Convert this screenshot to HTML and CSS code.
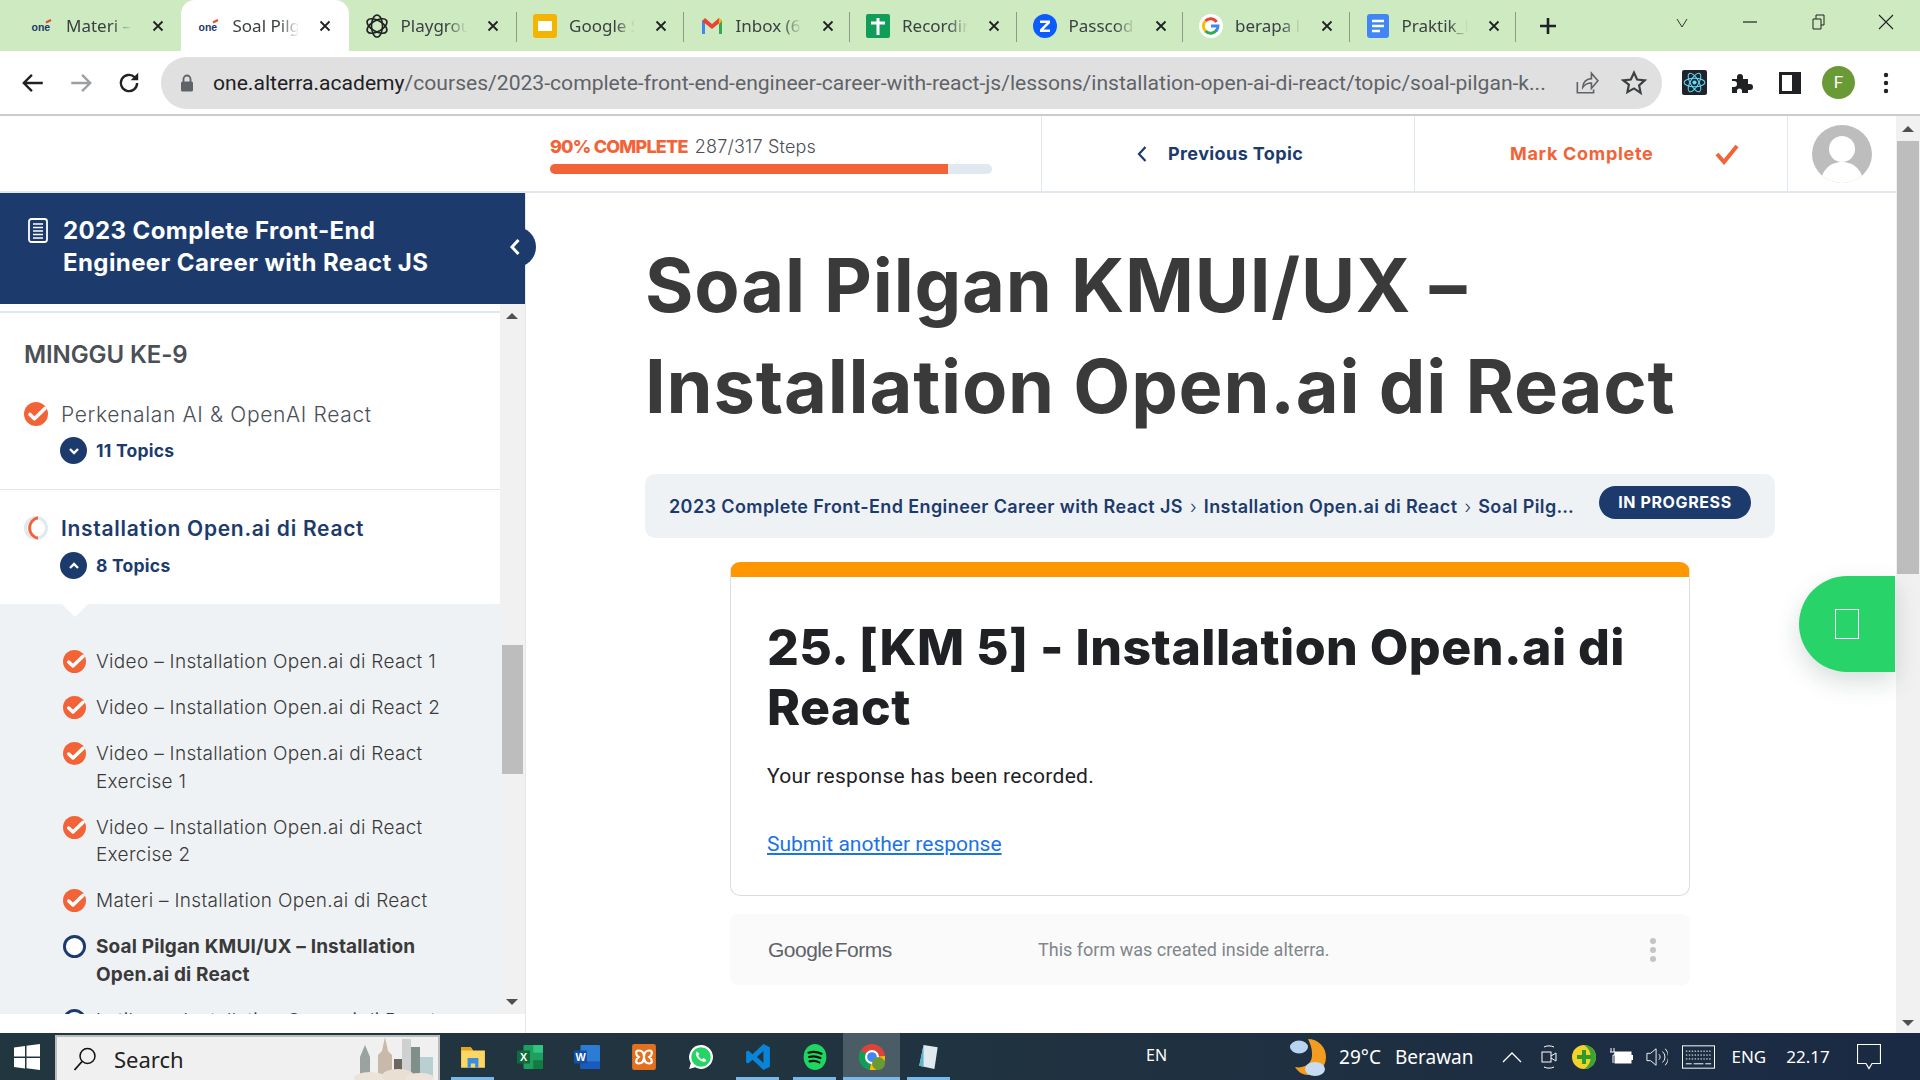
FILE: index.html
```html
<!DOCTYPE html>
<html lang="en">
<head>
  <meta charset="UTF-8">
  <title>Soal Pilgan KMUI/UX</title>
  <link rel="stylesheet" href="styles.css">
</head>
<body>

<svg class="defs" width="0" height="0">
  <symbol id="done" viewBox="0 0 24 24">
    <circle cx="12" cy="12" r="12" fill="#f26437"/>
    <path d="M6 12.5l4.4 4.2L21 6.5" fill="none" stroke="#fff" stroke-width="3.6" stroke-linecap="round" stroke-linejoin="round"/>
  </symbol>
  <symbol id="x" viewBox="0 0 12 12">
    <path d="M1.5 1.5l9 9M10.5 1.5l-9 9" stroke="#202124" stroke-width="1.8"/>
  </symbol>
  <symbol id="one" viewBox="0 0 24 24">
    <text x="1.5" y="17" font-family="Liberation Sans" font-size="10.5" font-weight="700" fill="#1c3b6c">one</text>
    <path d="M16 8.500l5-2.500" stroke="#e2492d" stroke-width="2"/>
  </symbol>
</svg>

<div class="tabstrip">
  <div class="tab"><svg class="favicon"><use href="#one"/></svg><span class="tab-title">Materi – Installation</span><svg class="tab-x"><use href="#x"/></svg></div>
  <div class="tab active"><svg class="favicon"><use href="#one"/></svg><span class="tab-title">Soal Pilgan KMUI</span><svg class="tab-x"><use href="#x"/></svg></div>
  <div class="tab sep">
    <svg class="favicon" viewBox="0 0 24 24" fill="none" stroke="#202124" stroke-width="1.6"><ellipse cx="12" cy="12" rx="5.5" ry="11"/><ellipse cx="12" cy="12" rx="5.5" ry="11" transform="rotate(60 12 12)"/><ellipse cx="12" cy="12" rx="5.5" ry="11" transform="rotate(120 12 12)"/></svg>
    <span class="tab-title">Playground</span><svg class="tab-x"><use href="#x"/></svg></div>
  <div class="tab sep">
    <svg class="favicon" viewBox="0 0 24 24"><rect x="0" y="0" width="24" height="24" rx="3" fill="#f4b400"/><rect x="5" y="7" width="14" height="10" fill="#fff"/></svg>
    <span class="tab-title">Google Slides</span><svg class="tab-x"><use href="#x"/></svg></div>
  <div class="tab sep">
    <svg class="favicon" viewBox="0 0 24 24"><path d="M2 20V7l3-2v15z" fill="#4285f4"/><path d="M19 20V5l3 2v13z" fill="#34a853"/><path d="M2 7l3-3 7 6 7-6 3 3-10 8z" fill="#ea4335"/><path d="M19 4l3 3-3 3z" fill="#fbbc04"/></svg>
    <span class="tab-title">Inbox (6) - gmail</span><svg class="tab-x"><use href="#x"/></svg></div>
  <div class="tab sep">
    <svg class="favicon" viewBox="0 0 24 24"><rect width="24" height="24" rx="2" fill="#0f9d58"/><path d="M12 4v17M5 9h14" stroke="#fff" stroke-width="3"/></svg>
    <span class="tab-title">Recording</span><svg class="tab-x"><use href="#x"/></svg></div>
  <div class="tab sep">
    <svg class="favicon" viewBox="0 0 24 24"><circle cx="12" cy="12" r="12" fill="#0b5cff"/><path d="M7 6.5h10V9l-6.500 6.500H17V18H7v-2.500L13.500 9H7z" fill="#fff"/></svg>
    <span class="tab-title">Passcode</span><svg class="tab-x"><use href="#x"/></svg></div>
  <div class="tab sep">
    <svg class="favicon" viewBox="0 0 24 24"><circle cx="12" cy="12" r="12" fill="#fff"/><path d="M17.5 8a7 7 0 0 0-11-1" fill="none" stroke="#ea4335" stroke-width="3"/><path d="M6.5 7a7 7 0 0 0 0 10" fill="none" stroke="#fbbc04" stroke-width="3"/><path d="M6.5 17a7 7 0 0 0 11-1" fill="none" stroke="#34a853" stroke-width="3"/><path d="M12 12h7a7 7 0 0 1-2 5" fill="none" stroke="#4285f4" stroke-width="3"/></svg>
    <span class="tab-title">berapa lama</span><svg class="tab-x"><use href="#x"/></svg></div>
  <div class="tab sep last">
    <svg class="favicon" viewBox="0 0 24 24"><rect x="1" width="22" height="24" rx="3" fill="#4285f4"/><path d="M6 7h12M6 12h12M6 17h8" stroke="#fff" stroke-width="2.4"/></svg>
    <span class="tab-title">Praktik_Front</span><svg class="tab-x"><use href="#x"/></svg></div>
  <svg class="new-tab" viewBox="0 0 20 20"><path d="M10 2v16M2 10h16" stroke="#202124" stroke-width="2.6"/></svg>
  <div class="window-btns">
    <svg viewBox="0 0 16 16"><path d="M3 5l5 8 5-8" fill="none" stroke="#333" stroke-width="1"/></svg>
    <svg viewBox="0 0 16 16"><path d="M1 8h14" stroke="#222" stroke-width="1.2"/></svg>
    <svg viewBox="0 0 16 16"><path d="M3 5h8v10H3zM6 5V1h8v10h-3" fill="none" stroke="#222" stroke-width="1"/></svg>
    <svg viewBox="0 0 16 16"><path d="M1 1l14 14M15 1L1 15" stroke="#222" stroke-width="1.1"/></svg>
  </div>
</div>

<div class="toolbar">
  <svg class="tool" viewBox="0 0 24 24"><path d="M21 12H4M11 4.500L3.500 12l7.500 7.500" fill="none" stroke="#202124" stroke-width="2.2"/></svg>
  <svg class="tool" viewBox="0 0 24 24"><path d="M3 12h17M13 4.500l7.500 7.500-7.500 7.500" fill="none" stroke="#9aa0a6" stroke-width="2.2"/></svg>
  <svg class="tool" viewBox="0 0 24 24"><path d="M19.5 12a7.500 7.500 0 1 1-2.200-5.300" fill="none" stroke="#202124" stroke-width="2.2"/><path d="M20.5 2.500v7h-7z" fill="#202124"/></svg>
  <div class="omnibox">
    <svg class="lock" viewBox="0 0 14 18"><path d="M3.500 8V5a3.500 3.500 0 0 1 7 0v3" fill="none" stroke="#5f6368" stroke-width="1.8"/><rect x="1" y="7.500" width="12" height="10" rx="1.5" fill="#5f6368"/></svg>
    <div class="url"><b>one.alterra.academy</b>/courses/2023-complete-front-end-engineer-career-with-react-js/lessons/installation-open-ai-di-react/topic/soal-pilgan-k...</div>
    <svg class="omni-icon" viewBox="0 0 24 24"><path d="M4 11v10h15v-3M9 16c0-5 4-8 8-8V3l6 7-6 7v-5c-4 0-6 1-8 4z" fill="none" stroke="#5f6368" stroke-width="1.5"/></svg>
    <svg class="omni-icon star" viewBox="0 0 24 24"><path d="M12 2.500l2.900 6.300 6.900.8-5.100 4.700 1.400 6.800L12 17l-6.100 3.400 1.400-6.800L2.200 9.600l6.900-.8z" fill="none" stroke="#3c4043" stroke-width="2"/></svg>
  </div>
  <div class="ext">
    <svg class="ext-react" viewBox="0 0 24 24"><rect width="24" height="24" rx="2" fill="#20232a"/><g fill="none" stroke="#61dafb" stroke-width="1"><ellipse cx="12" cy="12" rx="10" ry="4"/><ellipse cx="12" cy="12" rx="10" ry="4" transform="rotate(60 12 12)"/><ellipse cx="12" cy="12" rx="10" ry="4" transform="rotate(120 12 12)"/></g><circle cx="12" cy="12" r="2" fill="#61dafb"/></svg>
    <svg class="ext-puzzle" viewBox="0 0 24 24"><path d="M3 8h5V6a3 3 0 0 1 6 0v2h5v5h2a3 3 0 0 1 0 6h-2v3h-6v-2a2.500 2.500 0 0 0-5 0v2H3v-6h2a3 3 0 0 0 0-6H3z" fill="#202124"/></svg>
    <svg class="ext-panel" viewBox="0 0 22 22"><rect x="1.500" y="1.500" width="19" height="19" fill="none" stroke="#202124" stroke-width="3"/><rect x="13" y="2" width="7" height="18" fill="#202124"/></svg>
    <span class="profile">F</span>
    <svg class="ext-more" viewBox="0 0 6 24"><circle cx="3" cy="4" r="2.2" fill="#202124"/><circle cx="3" cy="12" r="2.2" fill="#202124"/><circle cx="3" cy="20" r="2.2" fill="#202124"/></svg>
  </div>
</div>

<div class="window">
  <div class="page">
    <header class="topbar">
      <div class="progress">
        <div class="progress-text"><strong>90% COMPLETE</strong> 287/317 Steps</div>
        <div class="progress-bar"><div class="progress-fill" style="width:90%"></div></div>
      </div>
      <div class="top-action prev">
        <svg viewBox="0 0 12 20"><path d="M9.500 3L3 10l6.500 7" fill="none" stroke="#1c3b6c" stroke-width="2.2"/></svg>
        <span>Previous Topic</span>
      </div>
      <div class="top-action mark">
        <span>Mark Complete</span>
        <svg viewBox="0 0 26 22"><path d="M3 11l7 8L23 3" fill="none" stroke="#f26437" stroke-width="4"/></svg>
      </div>
      <div class="avatar">
        <svg viewBox="0 0 60 60"><defs><clipPath id="av"><ellipse cx="30" cy="30" rx="30" ry="29"/></clipPath></defs><rect width="60" height="60" fill="#fff"/><g clip-path="url(#av)"><rect width="60" height="60" fill="#bdbdbd"/><circle cx="30" cy="25" r="13" fill="#fff"/><path d="M8 60c2-16 12-22 22-22s20 6 22 22z" fill="#fff"/></g></svg>
      </div>
    </header>

    <div class="content">
      <aside class="sidebar">
        <div class="course-head">
          <svg class="course-icon" viewBox="0 0 20 25"><rect x="1" y="1" width="18" height="23" rx="2.5" fill="none" stroke="#fff" stroke-width="1.8"/><path d="M5 6h10M5 9.500h10M5 13h10M5 16.500h10M5 20h10" stroke="#fff" stroke-width="1.5"/></svg>
          <h2>2023 Complete Front-End Engineer Career with React JS</h2>
          <div class="collapse"><svg viewBox="0 0 12 20"><path d="M9.500 3L3 10l6.500 7" fill="none" stroke="#fff" stroke-width="3"/></svg></div>
        </div>
        <div class="nav-wrap">
          <div class="nav">
            <h3 class="section-title">MINGGU KE-9</h3>

            <div class="lesson first">
              <div class="lesson-row">
                <svg class="lesson-status"><use href="#done"/></svg>
                <span>Perkenalan AI &amp; OpenAI React</span>
              </div>
              <div class="topic-toggle">
                <span class="toggle-dot"><svg viewBox="0 0 14 14"><path d="M3 5l4 4 4-4" fill="none" stroke="#fff" stroke-width="2.4"/></svg></span>
                <span>11 Topics</span>
              </div>
            </div>

            <div class="lesson current">
              <div class="lesson-row">
                <svg class="lesson-status" viewBox="0 0 24 24"><circle cx="12" cy="12" r="10.5" fill="none" stroke="#e2e8f0" stroke-width="3"/><path d="M14 1.700A10.500 10.500 0 0 0 14 22.300" fill="none" stroke="#f26437" stroke-width="3"/></svg>
                <span>Installation Open.ai di React</span>
              </div>
              <div class="topic-toggle">
                <span class="toggle-dot"><svg viewBox="0 0 14 14"><path d="M3 9l4-4 4 4" fill="none" stroke="#fff" stroke-width="2.4"/></svg></span>
                <span>8 Topics</span>
              </div>
            </div>

            <ul class="topics">
              <li><svg class="topic-status"><use href="#done"/></svg><span>Video – Installation Open.ai di React 1</span></li>
              <li><svg class="topic-status"><use href="#done"/></svg><span>Video – Installation Open.ai di React 2</span></li>
              <li><svg class="topic-status"><use href="#done"/></svg><span>Video – Installation Open.ai di React Exercise 1</span></li>
              <li><svg class="topic-status"><use href="#done"/></svg><span>Video – Installation Open.ai di React Exercise 2</span></li>
              <li><svg class="topic-status"><use href="#done"/></svg><span>Materi – Installation Open.ai di React</span></li>
              <li class="on"><svg class="topic-status" viewBox="0 0 24 24"><circle cx="12" cy="12" r="10.5" fill="#fff" stroke="#1c3b6c" stroke-width="3"/></svg><span>Soal Pilgan KMUI/UX – Installation Open.ai di React</span></li>
              <li><svg class="topic-status" viewBox="0 0 24 24"><circle cx="12" cy="12" r="10.5" fill="#fff" stroke="#1c3b6c" stroke-width="3"/></svg><span>Latihan – Installation Open.ai di React</span></li>
            </ul>
          </div>
          <div class="nav-scroll">
            <span class="arrow-up"></span>
            <div class="nav-thumb"></div>
            <span class="arrow-down"></span>
          </div>
        </div>
      </aside>

      <main class="main">
        <h1>Soal Pilgan KMUI/UX – Installation Open.ai di React</h1>
        <div class="crumbs">
          <div class="crumb-text">2023 Complete Front-End Engineer Career with React JS <i>›</i> Installation Open.ai di React <i>›</i> Soal Pilgan KMUI/UX – Installation Open.ai di React</div>
          <span class="badge">IN PROGRESS</span>
        </div>
        <div class="gform">
          <div class="gform-card">
            <h2>25. [KM 5] - Installation Open.ai di React</h2>
            <p>Your response has been recorded.</p>
            <a href="#">Submit another response</a>
          </div>
          <div class="gform-foot">
            <span class="gf-logo">Google<em>Forms</em></span>
            <span class="gf-note">This form was created inside alterra.</span>
            <span class="gf-dots"><i></i><i></i><i></i></span>
          </div>
        </div>
      </main>
    </div>

    <div class="chat-tab"><span class="tofu"></span></div>
  </div>

  <div class="page-scroll">
    <span class="arrow-up"></span>
    <div class="page-thumb"></div>
    <span class="arrow-down"></span>
  </div>
</div>

<footer class="taskbar">
  <svg class="start" viewBox="0 0 26 26"><path d="M0 3.500L11 2v10.500H0zM12.500 1.800L26 0v12.500H12.500zM0 14h11v10.500L0 23zM12.500 14H26v12l-13.500-1.800z" fill="#fff"/></svg>
  <div class="search">
    <svg class="search-glass" viewBox="0 0 24 24"><circle cx="14.500" cy="9" r="7.500" fill="none" stroke="#111" stroke-width="1.5"/><path d="M9 14.500L1.500 23" stroke="#111" stroke-width="1.8"/></svg>
    <span>Search</span>
    <svg class="city" viewBox="0 0 90 45"><path d="M12 45V22l5-12 5 12v23z" fill="#9aa39f"/><path d="M30 45V20l4-4 3-14 3 14 4 4v25z" fill="#c9b9a8"/><rect x="46" y="24" width="11" height="18" fill="#6d675f"/><rect x="54" y="4" width="9" height="38" fill="#cfd1d0"/><rect x="63" y="12" width="9" height="30" fill="#7f9088"/><rect x="72" y="22" width="13" height="20" fill="#b9cfd2"/><ellipse cx="22" cy="43" rx="16" ry="6" fill="#ece4d8"/><ellipse cx="50" cy="41" rx="16" ry="7" fill="#e9e0d3"/><ellipse cx="72" cy="43" rx="14" ry="5" fill="#ece4d8"/></svg>
  </div>
  <div class="apps">
    <div class="app on">
      <svg viewBox="0 0 24 24"><path d="M1 3h9l2 3h11v16H1z" fill="#fdd663"/><path d="M1 3h9l2 3H1z" fill="#e8a317"/><path d="M7 22v-9h10v9h-3v-4h-4v4z" fill="#3b8de0"/></svg>
    </div>
    <div class="app">
      <svg viewBox="0 0 24 24"><rect x="6" y="1" width="18" height="22" rx="1" fill="#1e9e5f"/><rect x="15" y="1" width="9" height="7" fill="#33c481"/><rect x="15" y="15" width="9" height="8" fill="#107c41"/><rect x="0" y="6" width="12" height="12" fill="#0f6b3a"/><text x="6" y="16" text-anchor="middle" font-family="Liberation Sans" font-size="10" font-weight="700" fill="#fff">X</text></svg>
    </div>
    <div class="app">
      <svg viewBox="0 0 24 24"><rect x="6" y="1" width="18" height="22" rx="1" fill="#2b7cd3"/><rect x="6" y="16" width="18" height="7" fill="#185abd"/><rect x="0" y="6" width="12" height="12" fill="#124fa8"/><text x="6" y="16" text-anchor="middle" font-family="Liberation Sans" font-size="10" font-weight="700" fill="#fff">W</text></svg>
    </div>
    <div class="app">
      <svg viewBox="0 0 24 24"><rect x="1" width="22" height="24" rx="2" fill="#e2701f"/><path d="M7 6c5 0 5 5 5 6s0 6-5 6c-3 0-3-4 0-6-3-2-3-6 0-6zM17 6c-5 0-5 5-5 6s0 6 5 6c3 0 3-4 0-6 3-2 3-6 0-6z" fill="none" stroke="#fff" stroke-width="2"/></svg>
    </div>
    <div class="app">
      <svg viewBox="0 0 24 24"><path d="M12 1a11 11 0 0 0-9.400 16.700L1 23l5.500-1.500A11 11 0 1 0 12 1z" fill="#fff"/><circle cx="12" cy="12" r="9" fill="#25d366"/><path d="M8 7c-2 2 0 6 3 8s5 2 6 0l-2.500-2-1.500 1c-1.500-.5-3-2-3.500-3.500l1-1.500z" fill="#fff"/></svg>
    </div>
    <div class="app on">
      <svg viewBox="0 0 24 24"><path d="M17 0l6 3v18l-6 3L7 14.500 3 18l-2-1V7l2-1 4 3.500zM17 6.500L11 12l6 5.500z" fill="#0a84d6"/></svg>
    </div>
    <div class="app on">
      <svg viewBox="0 0 24 24"><ellipse cx="12" cy="12" rx="10.5" ry="12" fill="#1ed760"/><path d="M6 8c4-1.200 8-1 12 1M6.500 12c3.500-1 7-.8 10.500 1M7 16c3-.8 6-.6 9 1" fill="none" stroke="#111" stroke-width="2" stroke-linecap="round"/></svg>
    </div>
    <div class="app on active">
      <svg viewBox="0 0 24 24"><circle cx="12" cy="12" r="12" fill="#db4437"/><path d="M12 12L1.500 6A12 12 0 0 0 10 24z" fill="#0f9d58"/><path d="M12 12l12-1a12 12 0 0 1-14 13z" fill="#fbbc04"/><circle cx="12" cy="12" r="5.5" fill="#4285f4" stroke="#fff" stroke-width="2"/><circle cx="18" cy="18" r="6" fill="#6a9a35"/></svg>
    </div>
    <div class="app on">
      <svg viewBox="0 0 24 24"><path d="M7 1l13 2-3 20-14-3z" fill="#dfeaf0"/><path d="M7 1L3 20l4 1z" fill="#5db4c8"/></svg>
    </div>
  </div>
  <span class="lang-en">EN</span>
  <div class="tray">
    <svg class="weather" viewBox="0 0 36 40"><path d="M18 2a18 18 0 0 1 0 36c-5 0-10-3-13-8 10 2 18-4 17-14 0-5-2-10-4-14z" fill="#f39c1f"/><ellipse cx="9" cy="10" rx="9" ry="6.5" fill="#b8d4f0"/><ellipse cx="25" cy="32" rx="10" ry="7" fill="#c6dcf2"/></svg>
    <span class="temp">29°C</span>
    <span class="cond">Berawan</span>
    <svg class="tray-caret" viewBox="0 0 20 12"><path d="M1 11l9-9 9 9" fill="none" stroke="#fff" stroke-width="1.3"/></svg>
    <svg class="tray-cam" viewBox="0 0 16 24"><path d="M3 2c3-1.500 7-1.500 10 0M3 22c3 1.500 7 1.500 10 0" fill="none" stroke="#fff"/><rect x="1" y="7" width="9" height="10" fill="none" stroke="#fff"/><path d="M10 11l5-3v8l-5-3" fill="none" stroke="#fff"/></svg>
    <svg class="tray-360" viewBox="0 0 24 24"><circle cx="12" cy="12" r="12" fill="#f3d329"/><path d="M12 0a12 12 0 0 1 0 24 14 14 0 0 0 0-24z" fill="#3aa534"/><path d="M10 5h4v5h5v4h-5v5h-4v-5H5v-4h5z" fill="#2e9a2e"/></svg>
    <svg class="tray-batt" viewBox="0 0 24 20"><rect x="6" y="5" width="16" height="11" fill="#fff" stroke="#fff"/><rect x="22" y="8" width="2" height="5" fill="#fff"/><path d="M2 1v4M5 1v4M1 5h5v3H4v8" fill="none" stroke="#fff"/></svg>
    <svg class="tray-vol" viewBox="0 0 24 22"><path d="M1 7h4l6-5v18l-6-5H1z" fill="none" stroke="#fff"/><path d="M14 8a4 4 0 0 1 0 6M18 5a8 8 0 0 1 0 12M21 2a13 13 0 0 1 0 18" fill="none" stroke="#fff"/></svg>
    <svg class="tray-kbd" viewBox="0 0 34 24"><rect x=".5" y=".5" width="33" height="23" fill="none" stroke="#fff"/><path d="M4 6h26M4 10h26M4 14h26" stroke="#fff" stroke-dasharray="1.500 1.500"/><path d="M4 19h6M12 19h10M24 19h6" stroke="#fff"/></svg>
    <span class="tray-lang">ENG</span>
    <span class="clock">22.17</span>
    <svg class="tray-note" viewBox="0 0 24 26"><path d="M.5.500h23v19H15l-3 5-3-5H.5z" fill="none" stroke="#fff" stroke-width="1.2"/></svg>
  </div>
</footer>

</body>
</html>
```

FILE: styles.css
```css
* {
  box-sizing: border-box;
}
html, body {
  margin: 0;
  height: 100%;
  overflow: hidden;
}
body {
  display: flex;
  flex-direction: column;
  height: 1080px;
  font-family: "Inter", "Liberation Sans", sans-serif;
  color: #3a3a3a;
  background-color: #ffffff;
}
.defs {
  position: absolute;
}

/* browser chrome */
.tabstrip {
  display: flex;
  align-items: center;
  height: 51px;
  padding-left: 14px;
  background-color: #cdeac0;
  flex-shrink: 0;
}
.tab {
  display: flex;
  align-items: center;
  width: 166.5px;
  height: 51px;
  padding-left: 16px;
  position: relative;
  font-family: "Noto Sans", sans-serif;
  font-size: 17px;
  color: #3c4043;
}
.tab.sep::after {
  content: "";
  position: absolute;
  right: 0;
  top: 12px;
  height: 30px;
  width: 1px;
  background-color: #8d9a87;
}
.tab.active {
  background-color: #ffffff;
  border-radius: 14px 14px 0 0;
  width: 168px;
}
.tab.active + .tab {
  width: 168.5px;
}
.favicon {
  width: 24px;
  height: 24px;
  flex-shrink: 0;
}
.tab-title {
  width: 66px;
  margin-left: 12px;
  white-space: nowrap;
  overflow: hidden;
  -webkit-mask-image: linear-gradient(to right, #000 70%, transparent);
  mask-image: linear-gradient(to right, #000 70%, transparent);
}
.tab-x {
  width: 12px;
  height: 12px;
  margin-left: 20px;
  flex-shrink: 0;
}
.new-tab {
  width: 20px;
  height: 20px;
  margin-left: 22px;
}
.window-btns {
  display: flex;
  align-items: center;
  gap: 52px;
  margin-left: auto;
  padding-right: 26px;
  margin-top: -8px;
}
.window-btns svg {
  width: 16px;
  height: 16px;
}
.toolbar {
  display: flex;
  align-items: center;
  height: 65px;
  padding-left: 20px;
  border-bottom: 2px solid #cccccc;
  flex-shrink: 0;
}
.tool {
  width: 26px;
  height: 26px;
  margin-right: 22px;
}
.toolbar .omnibox {
  margin-left: -3px;
}
.omnibox {
  display: flex;
  align-items: center;
  width: 1501px;
  height: 52px;
  padding: 0 12px 0 20px;
  border-radius: 26px;
  background-color: #e0e0e0;
}
.lock {
  width: 14px;
  height: 18px;
  margin-left: -1px;
  flex-shrink: 0;
}
.url {
  width: 1336px;
  margin-left: 19px;
  font-family: "Roboto", sans-serif;
  font-size: 21.1px;
  color: #5f6368;
  white-space: nowrap;
  overflow: hidden;
  flex-shrink: 0;
}
.url b {
  font-weight: 400;
  color: #202124;
}
.omni-icon {
  width: 26px;
  height: 26px;
  margin-left: 24px;
  flex-shrink: 0;
}
.omni-icon.star {
  margin-left: 22px;
}
.ext {
  display: flex;
  align-items: center;
  margin-left: 20px;
}
.ext-react {
  width: 25px;
  height: 25px;
}
.ext-puzzle {
  width: 24px;
  height: 24px;
  margin-left: 22px;
}
.ext-panel {
  width: 22px;
  height: 22px;
  margin-left: 26px;
}
.profile {
  width: 33px;
  height: 33px;
  margin-left: 21px;
  border-radius: 50%;
  background-color: #6a9a35;
  color: #ffffff;
  font-family: "Roboto", sans-serif;
  font-size: 17px;
  line-height: 33px;
  text-align: center;
}
.ext-more {
  width: 6px;
  height: 24px;
  margin-left: 28px;
}

/* page area */
.window {
  display: flex;
  flex: 1;
  min-height: 0;
}
.page {
  position: relative;
  display: flex;
  flex-direction: column;
  flex: 1;
  min-width: 0;
}
.topbar {
  display: flex;
  height: 77px;
  border-bottom: 2px solid #e2e8f0;
  flex-shrink: 0;
}
.progress {
  width: 491px;
  margin-left: 550px;
  padding-top: 18px;
}
.progress-text {
  font-size: 18px;
  line-height: 26px;
  font-weight: 300;
  letter-spacing: 0.2px;
  color: #4b4f56;
}
.progress-text strong {
  font-weight: 800;
  color: #f26437;
  letter-spacing: -0.8px;
  margin-right: 2px;
}
.progress-bar {
  width: 442px;
  height: 10px;
  margin-top: 4px;
  border-radius: 5px;
  background-color: #e2e8f0;
  overflow: hidden;
}
.progress-fill {
  height: 100%;
  background-color: #f26437;
}
.top-action {
  display: flex;
  align-items: center;
  width: 373px;
  border-left: 1px solid #e2e8f0;
  font-size: 18px;
  font-weight: 700;
}
.top-action.prev {
  padding-left: 94px;
  letter-spacing: 0.4px;
  color: #1c3b6c;
}
.top-action.prev svg {
  width: 12px;
  height: 20px;
  margin-right: 20px;
}
.top-action.mark {
  padding-left: 95px;
  letter-spacing: 0.7px;
  color: #f26437;
}
.top-action.mark svg {
  width: 26px;
  height: 22px;
  margin-left: 60px;
}
.avatar {
  flex: 1;
  display: flex;
  justify-content: center;
  align-items: center;
  border-left: 1px solid #e2e8f0;
}
.avatar svg {
  width: 60px;
  height: 60px;
}
.content {
  display: flex;
  flex: 1;
  min-height: 0;
}

/* sidebar */
.sidebar {
  position: relative;
  display: flex;
  flex-direction: column;
  width: 526px;
  padding-bottom: 19px;
  border-right: 1px solid #e2e8f0;
  flex-shrink: 0;
}
.course-head {
  position: relative;
  display: flex;
  height: 111px;
  padding: 22px 60px 0 28px;
  background-color: #1c3b6c;
  flex-shrink: 0;
}
.course-icon {
  width: 20px;
  height: 25px;
  margin-top: 3px;
  flex-shrink: 0;
}
.course-head h2 {
  margin: 0 0 0 15px;
  font-size: 24px;
  line-height: 32px;
  font-weight: 700;
  color: #ffffff;
  letter-spacing: 0.4px;
}
.collapse {
  position: absolute;
  right: -11px;
  top: 34px;
  display: flex;
  align-items: center;
  justify-content: center;
  width: 40px;
  height: 40px;
  border-radius: 50%;
  background-color: #1c3b6c;
}
.collapse svg {
  width: 12px;
  height: 20px;
  margin-right: 2px;
}
.nav-wrap {
  display: flex;
  flex: 1;
  min-height: 0;
}
.nav {
  flex: 1;
  min-width: 0;
  margin-top: 7px;
  border-top: 2px solid #e2e8f0;
  overflow: hidden;
}
.section-title {
  margin: 0;
  padding: 26px 24px 27px;
  font-size: 24px;
  line-height: 32px;
  font-weight: 600;
  color: #4b4f56;
  letter-spacing: -0.1px;
}
.lesson {
  padding: 22px 0 25px 24px;
}
.lesson.first {
  padding-top: 0;
  border-bottom: 1px solid #e2e8f0;
}
.lesson-row {
  display: flex;
  align-items: center;
  height: 32px;
  font-size: 21px;
  font-weight: 300;
  letter-spacing: 0.65px;
  color: #4b4f56;
}
.lesson.current .lesson-row {
  font-weight: 600;
  letter-spacing: 0.72px;
  color: #1c3b6c;
}
.lesson-status {
  width: 24px;
  height: 24px;
  margin-right: 13px;
}
.topic-toggle {
  display: flex;
  align-items: center;
  margin: 7px 0 0 36px;
  font-size: 17.5px;
  font-weight: 700;
  letter-spacing: 0.25px;
  color: #1c3b6c;
}
.lesson.current .topic-toggle {
  margin-top: 8px;
}
.toggle-dot {
  display: flex;
  align-items: center;
  justify-content: center;
  width: 27px;
  height: 27px;
  margin-right: 9px;
  border-radius: 50%;
  background-color: #1c3b6c;
}
.toggle-dot svg {
  width: 14px;
  height: 14px;
}
.topics {
  position: relative;
  display: flex;
  flex-direction: column;
  gap: 18.5px;
  height: 420px;
  margin: 0;
  padding: 44px 48px 0 63px;
  list-style: none;
  background-color: #eff2f5;
  font-size: 19px;
  line-height: 27.5px;
  font-weight: 300;
  letter-spacing: 0.31px;
  color: #3a3a3a;
}
.topics::before {
  content: "";
  position: absolute;
  left: 62px;
  top: 0;
  border-left: 13px solid transparent;
  border-right: 13px solid transparent;
  border-top: 13px solid #ffffff;
}
.topics li {
  display: flex;
}
.topics li.on {
  font-weight: 700;
  letter-spacing: 0.15px;
}
.topic-status {
  width: 23px;
  height: 23px;
  margin: 2px 10px 0 0;
  flex-shrink: 0;
}
.nav-scroll {
  display: flex;
  flex-direction: column;
  align-items: center;
  width: 25px;
  padding-right: 1px;
  background-color: #f1f1f1;
  flex-shrink: 0;
}
.arrow-up, .arrow-down {
  width: 0;
  height: 0;
  border-left: 6px solid transparent;
  border-right: 6px solid transparent;
}
.arrow-up {
  border-bottom: 6px solid #505050;
}
.arrow-down {
  border-top: 6px solid #505050;
}
.nav-scroll .arrow-up {
  margin-top: 9px;
}
.nav-thumb {
  width: 21px;
  height: 129px;
  margin-top: 326px;
  background-color: #bdbdbd;
}
.nav-scroll .arrow-down {
  margin-top: auto;
  margin-bottom: 9px;
}

/* main column */
.main {
  flex: 1;
  min-width: 0;
  padding: 42px 0 0 119px;
}
.main h1 {
  width: 1060px;
  margin: 0 0 37px;
  font-size: 74px;
  line-height: 101px;
  font-weight: 700;
  letter-spacing: 0.8px;
  color: #3a3a3a;
}
.crumbs {
  display: flex;
  align-items: center;
  width: 1130px;
  height: 64px;
  padding: 0 24px;
  border-radius: 10px;
  background-color: #eff2f5;
}
.crumb-text {
  width: 908px;
  font-size: 18px;
  font-weight: 600;
  letter-spacing: 0.4px;
  color: #1c3b6c;
  white-space: nowrap;
  overflow: hidden;
  text-overflow: ellipsis;
}
.crumb-text i {
  font-style: normal;
  font-weight: 300;
  margin: 0 2px;
}
.badge {
  margin: -8px 0 0 auto;
  width: 152px;
  height: 33px;
  border-radius: 17px;
  background-color: #1c3b6c;
  color: #ffffff;
  font-size: 16px;
  font-weight: 700;
  line-height: 32px;
  letter-spacing: 0.6px;
  text-align: center;
}
.gform {
  width: 960px;
  margin: 24px 0 0 85px;
  font-family: "Roboto", sans-serif;
}
.gform-card {
  height: 334px;
  padding: 40px 36px 0;
  border: 1px solid #dadce0;
  border-top: 15px solid #ff9800;
  border-radius: 10px;
  color: #202124;
}
.gform-card h2 {
  margin: 0;
  font-family: "Inter", sans-serif;
  font-size: 50px;
  line-height: 60px;
  font-weight: 800;
  letter-spacing: 0.47px;
}
.gform-card p {
  margin: 24px 0 0;
  font-size: 21px;
  line-height: 30px;
  letter-spacing: 0.3px;
}
.gform-card a {
  display: inline-block;
  margin-top: 38px;
  font-size: 21px;
  line-height: 30px;
  color: #1a73e8;
  text-decoration: underline;
}
.gform-foot {
  display: flex;
  align-items: center;
  height: 71px;
  margin-top: 18px;
  padding: 0 34px 0 38px;
  border-radius: 8px;
  background-color: #fafafa;
}
.gf-logo {
  width: 270px;
  font-family: "Liberation Sans", sans-serif;
  font-size: 21px;
  letter-spacing: -0.5px;
  color: #5f6368;
}
.gf-logo em {
  font-style: normal;
  margin-left: 2px;
}
.gf-note {
  font-size: 18px;
  color: #80868b;
}
.gf-dots {
  display: flex;
  flex-direction: column;
  gap: 3px;
  margin-left: auto;
}
.gf-dots i {
  width: 6px;
  height: 6px;
  border-radius: 50%;
  background-color: #c4c4c4;
}
.chat-tab {
  position: absolute;
  right: 1px;
  top: 460px;
  display: flex;
  align-items: center;
  justify-content: center;
  width: 96px;
  height: 96px;
  border-radius: 48px 0 0 48px;
  background-color: #28d46a;
  box-shadow: 0 10px 24px rgba(30, 80, 60, 0.18);
}
.tofu {
  width: 24px;
  height: 30px;
  border: 1px solid #ffffff;
}
.page-scroll {
  display: flex;
  flex-direction: column;
  align-items: center;
  width: 24px;
  background-color: #f1f1f1;
  flex-shrink: 0;
}
.page-scroll .arrow-up {
  margin-top: 10px;
}
.page-thumb {
  width: 22px;
  height: 433px;
  margin-top: 9px;
  background-color: #bdbdbd;
}
.page-scroll .arrow-down {
  margin-top: auto;
  margin-bottom: 7px;
}

/* windows taskbar */
.taskbar {
  display: flex;
  align-items: center;
  height: 47px;
  background: linear-gradient(to right, #22363f, #203340 50%, #1b2a44);
  flex-shrink: 0;
}
.start {
  width: 26px;
  height: 26px;
  margin-left: 14px;
}
.search {
  display: flex;
  align-items: center;
  width: 385px;
  height: 45px;
  margin: 2px 0 0 15px;
  padding-left: 16px;
  background-color: #f0f0f0;
  border: 2px solid #bdbdbd;
  border-bottom: 0;
  font-family: "Noto Sans", sans-serif;
  font-size: 22px;
  color: #222222;
  position: relative;
}
.search-glass {
  width: 24px;
  height: 24px;
  margin-right: 17px;
}
.city {
  position: absolute;
  right: 0;
  bottom: 0;
  width: 90px;
  height: 45px;
}
.apps {
  display: flex;
  margin-left: 4px;
}
.app {
  position: relative;
  display: flex;
  align-items: center;
  justify-content: center;
  width: 57px;
  height: 47px;
}
.app svg {
  width: 26px;
  height: 26px;
}
.app.on::after {
  content: "";
  position: absolute;
  left: 7px;
  right: 7px;
  bottom: 0;
  height: 3px;
  background-color: #76b9ed;
}
.app.active {
  background-color: #4a5c66;
}
.app.active::after {
  left: 0;
  right: 0;
}
.lang-en {
  margin: -4px 0 0 189px;
  font-family: "Noto Sans", sans-serif;
  font-size: 16px;
  color: #ffffff;
}
.tray {
  display: flex;
  align-items: center;
  margin-left: 123px;
  font-family: "Noto Sans", sans-serif;
  font-size: 19px;
  color: #ffffff;
}
.weather {
  width: 36px;
  height: 40px;
}
.temp {
  margin-left: 13px;
}
.cond {
  margin-left: 14px;
}
.tray-caret {
  width: 20px;
  height: 12px;
  margin-left: 29px;
}
.tray-cam {
  width: 16px;
  height: 24px;
  margin-left: 19px;
}
.tray-360 {
  width: 24px;
  height: 24px;
  margin-left: 15px;
}
.tray-batt {
  width: 24px;
  height: 20px;
  margin-left: 13px;
}
.tray-vol {
  width: 22px;
  height: 22px;
  margin-left: 13px;
}
.tray-kbd {
  width: 33px;
  height: 24px;
  margin-left: 14px;
}
.tray-lang {
  margin-left: 16px;
  font-size: 17px;
}
.clock {
  margin-left: 20px;
  font-size: 17px;
}
.tray-note {
  width: 24px;
  height: 26px;
  margin-left: 27px;
}
```
